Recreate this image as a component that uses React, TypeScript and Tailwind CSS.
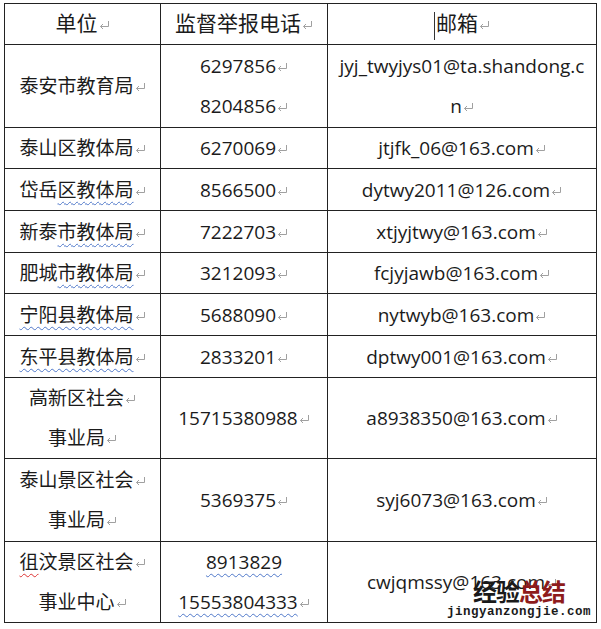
const font = { fontFamily: '"Open Sans", "Noto Sans CJK SC", sans-serif' }

function Mark() {
  return (
    <svg width="11" height="10" viewBox="0 0 11 10" className="ml-[1px] inline-block align-[1px]">
      <path d="M9.5 1 V6.5 H1.5 M4 4 L1.5 6.5 L4 9" fill="none" stroke="#a0a0a0" strokeWidth="1" />
    </svg>
  )
}

const wavy = "underline decoration-wavy decoration-[#4f78c9] decoration-1 underline-offset-[4px]"
const wavyRed = "underline decoration-wavy decoration-[#d33] decoration-1 underline-offset-[4px]"

interface Row {
  unit: React.ReactNode[]
  phone: React.ReactNode[]
  mail: React.ReactNode[]
  h: string
}

const rows: Row[] = [
  { unit: [<>泰安市教育局<Mark /></>], phone: [<>6297856<Mark /></>, <>8204856<Mark /></>], mail: [<>jyj_twyjys01@ta.shandong.c</>, <>n<Mark /></>], h: "h-[83px]" },
  { unit: [<>泰山区教体局<Mark /></>], phone: [<>6270069<Mark /></>], mail: [<>jtjfk_06@163.com<Mark /></>], h: "h-[41px]" },
  { unit: [<>岱岳<span className={wavy}>区教体局</span><Mark /></>], phone: [<>8566500<Mark /></>], mail: [<>dytwy2011@126.com<Mark /></>], h: "h-[42px]" },
  { unit: [<>新泰<span className={wavy}>市教体局</span><Mark /></>], phone: [<>7222703<Mark /></>], mail: [<>xtjyjtwy@163.com<Mark /></>], h: "h-[42px]" },
  { unit: [<>肥城<span className={wavy}>市教体局</span><Mark /></>], phone: [<>3212093<Mark /></>], mail: [<>fcjyjawb@163.com<Mark /></>], h: "h-[41px]" },
  { unit: [<><span className={wavy}>宁阳县教体局</span><Mark /></>], phone: [<>5688090<Mark /></>], mail: [<>nytwyb@163.com<Mark /></>], h: "h-[42px]" },
  { unit: [<><span className={wavy}>东平县教体局</span><Mark /></>], phone: [<>2833201<Mark /></>], mail: [<>dptwy001@163.com<Mark /></>], h: "h-[42px]" },
  { unit: [<>高新区社会<Mark /></>, <>事业局<Mark /></>], phone: [<>15715380988<Mark /></>], mail: [<>a8938350@163.com<Mark /></>], h: "h-[81px]" },
  { unit: [<>泰山景区社会<Mark /></>, <>事业局<Mark /></>], phone: [<>5369375<Mark /></>], mail: [<>syj6073@163.com<Mark /></>], h: "h-[83px]" },
  { unit: [<><span className={wavyRed}>徂</span>汶景区社会<Mark /></>, <>事业中心<Mark /></>], phone: [<span className={wavy}>8913829</span>, <><span className={wavy}>15553804333</span><Mark /></>], mail: [<>cwjqmssy@163.com<Mark /></>], h: "h-[81px]" },
]

function Cell({ lines }: { lines: React.ReactNode[] }) {
  return (
    <td className="border border-[#222] p-0 text-center align-middle">
      {lines.map((l, i) => (
        <div key={i} className="leading-[40px] whitespace-nowrap">{l}</div>
      ))}
    </td>
  )
}

export default function App() {
  return (
    <div className="relative w-[601px] h-[629px] bg-white overflow-hidden" style={font}>
      <div className="pl-[4px] pt-[3px]">
        <table className="border-collapse table-fixed w-[592px] text-[19px] text-[#1b1b1b]">
          <colgroup>
            <col className="w-[156px]" />
            <col className="w-[167px]" />
            <col className="w-[269px]" />
          </colgroup>
          <thead>
            <tr className="h-[41px] text-[21px]">
              <th className="border border-[#222] p-0 font-normal">单位<Mark /></th>
              <th className="border border-[#222] p-0 font-normal">监督举报电话<Mark /></th>
              <th className="border border-[#222] p-0 font-normal">
                <span className="inline-block w-[1px] h-[28px] bg-[#333] align-middle mr-[1px]" />邮箱<Mark />
              </th>
            </tr>
          </thead>
          <tbody>
            {rows.map((r, i) => (
              <tr key={i} className={r.h}>
                <Cell lines={r.unit} />
                <Cell lines={r.phone} />
                <Cell lines={r.mail} />
              </tr>
            ))}
          </tbody>
        </table>
      </div>
      <div className="absolute left-[450px] top-[577px] w-[138px] flex flex-col items-center">
        <div className="text-[24px] font-bold leading-[28px] tracking-[-1px]" style={{ fontFamily: '"Noto Sans CJK SC", sans-serif' }}>
          <span className="text-[#1a1a1a]">经验</span><span className="text-[#8e1b1b]">总结</span>
        </div>
        <div className="text-[12.5px] font-bold leading-[14px] tracking-[0.5px] text-[#1a1a1a]" style={{ fontFamily: '"Liberation Mono", monospace' }}>
          jingyanzongjie.com
        </div>
      </div>
    </div>
  )
}
